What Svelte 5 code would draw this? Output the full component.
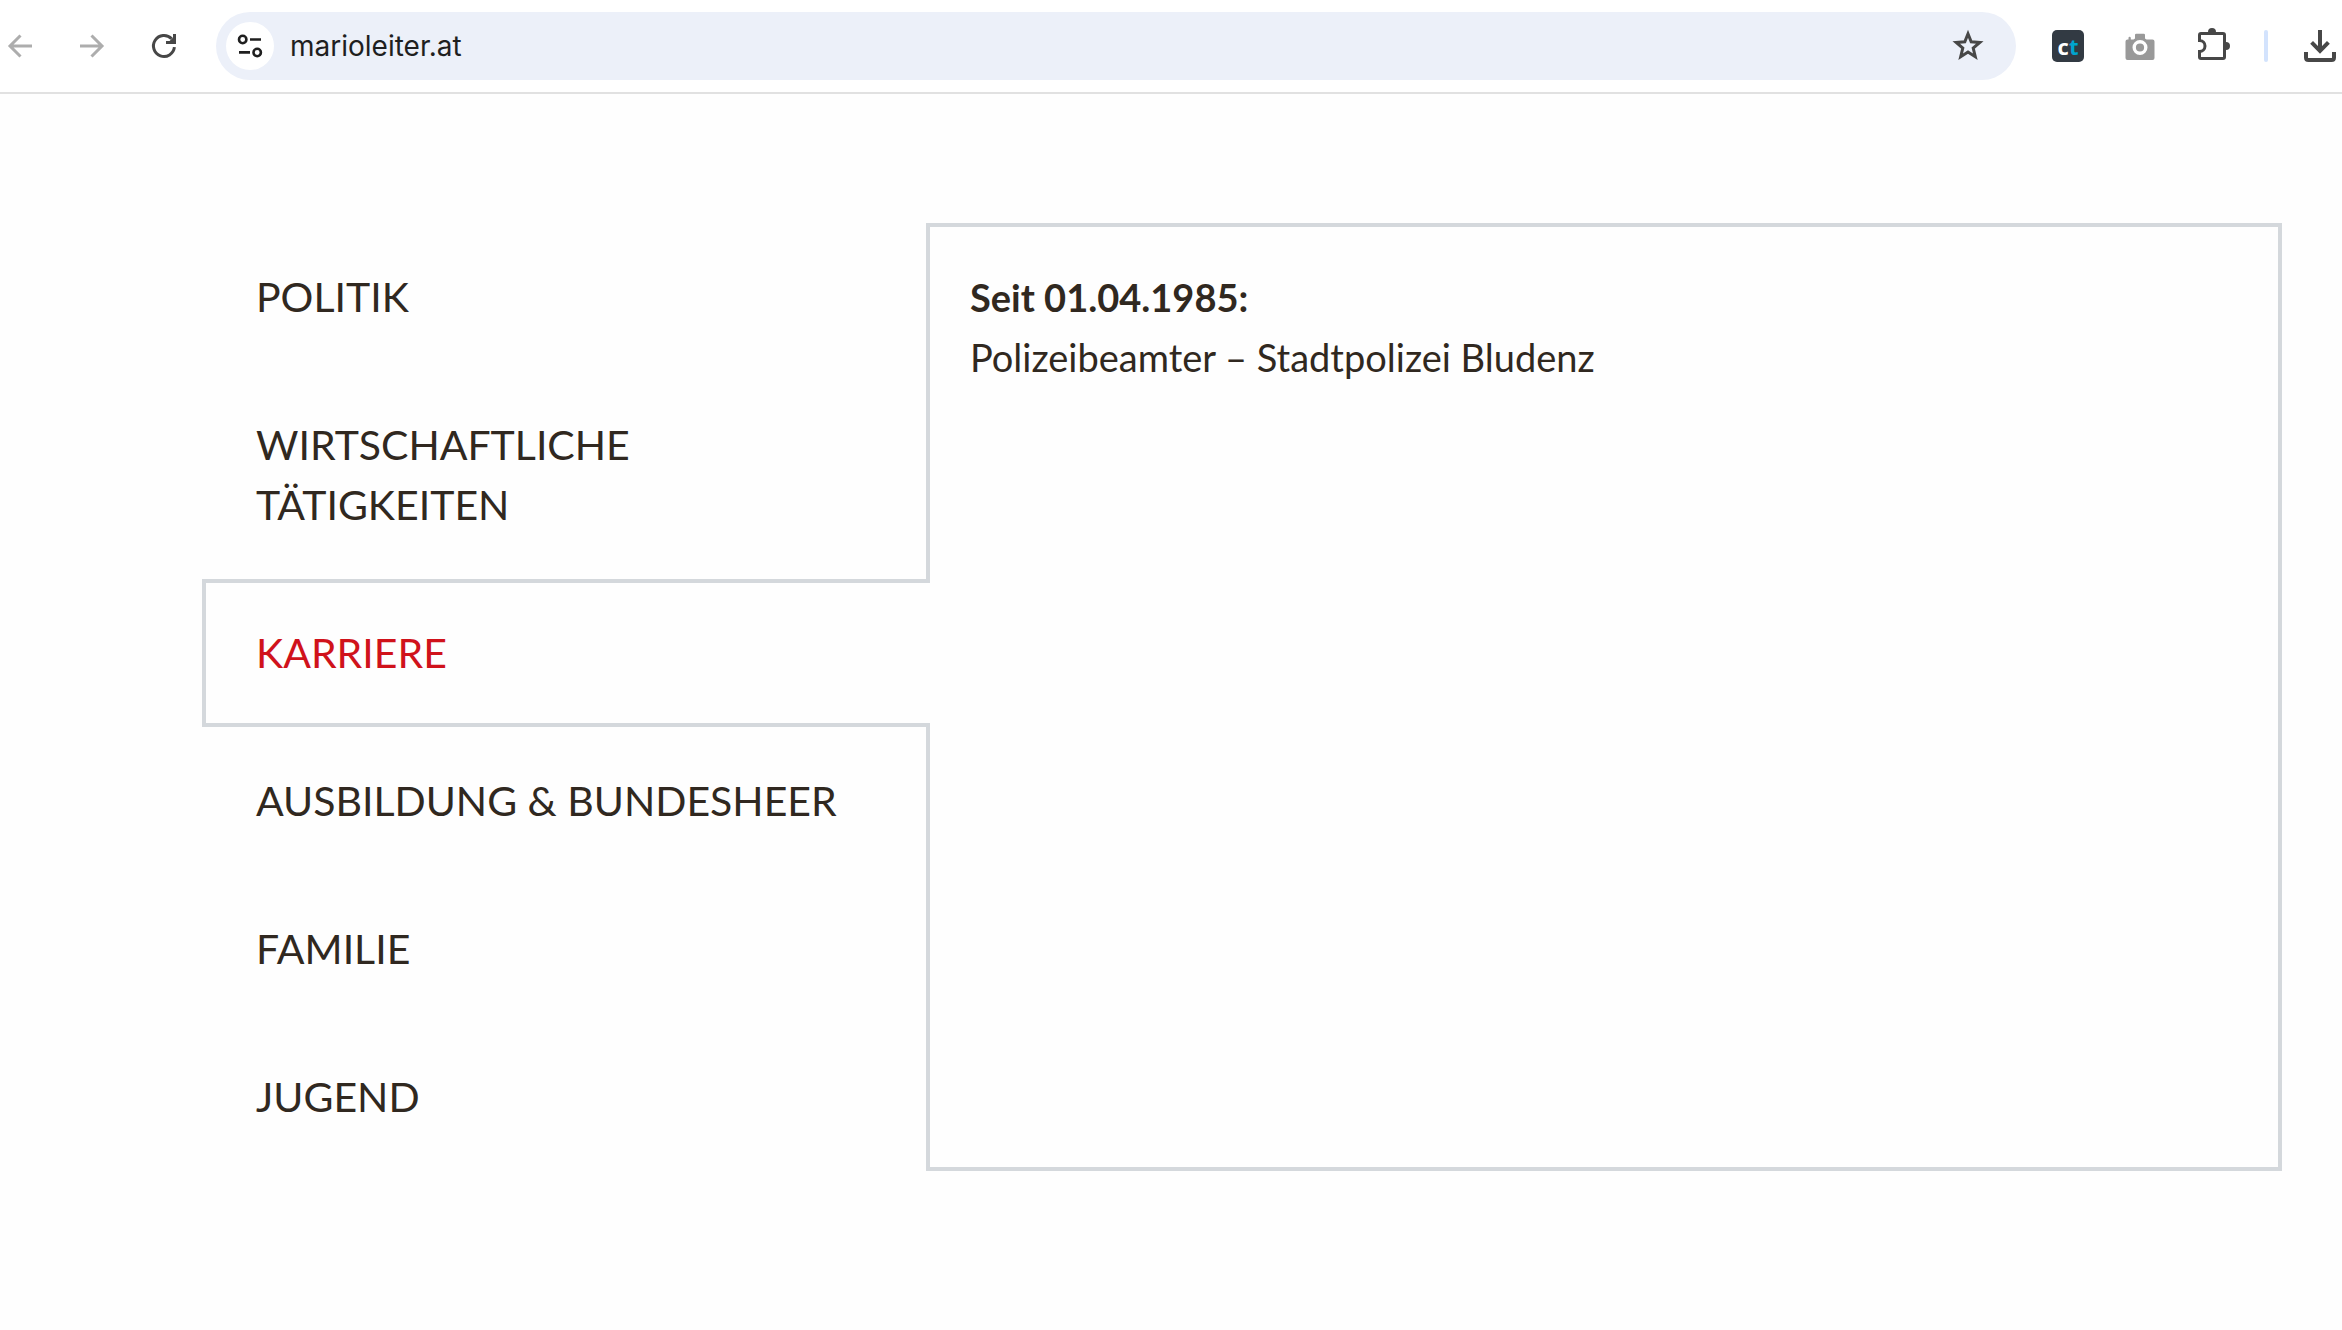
<script>
  let active = 'karriere';
  let url = 'marioleiter.at';

  const tabs = [
    { id: 'politik', label: 'Politik' },
    { id: 'wirtschaft', label: 'Wirtschaftliche Tätigkeiten' },
    {
      id: 'karriere',
      label: 'Karriere',
      entries: [{ date: 'Seit 01.04.1985:', text: 'Polizeibeamter – Stadtpolizei Bludenz' }]
    },
    { id: 'ausbildung', label: 'Ausbildung & Bundesheer' },
    { id: 'familie', label: 'Familie' },
    { id: 'jugend', label: 'Jugend' }
  ];

  $: current = tabs.find((tab) => tab.id === active);
</script>

<header class="toolbar">
  <nav class="history" aria-label="Navigation">
    <button class="icon muted" aria-label="Zurück" disabled>
      <svg viewBox="0 0 32 32"><path d="M28 16H6M16.5 5.5L6 16l10.5 10.5" fill="none" stroke="currentColor" stroke-width="3" /></svg>
    </button>
    <button class="icon muted" aria-label="Vorwärts" disabled>
      <svg viewBox="0 0 32 32"><path d="M4 16h22M15.5 5.5L26 16 15.5 26.5" fill="none" stroke="currentColor" stroke-width="3" /></svg>
    </button>
    <button class="icon" aria-label="Neu laden">
      <svg viewBox="0 0 32 32">
        <path d="M26.4 17.2A10.5 10.5 0 1 1 23.6 8.8" fill="none" stroke="currentColor" stroke-width="3" />
        <path d="M25 4h3v10H18v-3h3.6L25 7.5z" fill="currentColor" />
      </svg>
    </button>
  </nav>

  <div class="omnibox">
    <button class="site-info" aria-label="Website-Informationen">
      <svg viewBox="0 0 48 48" fill="none" stroke="currentColor" stroke-width="2.6">
        <circle cx="16.7" cy="17.5" r="3.7" />
        <path d="M24 17.5h11M13 30.4h11" />
        <circle cx="31.2" cy="30.5" r="3.7" />
      </svg>
    </button>
    <input type="text" aria-label="Adresse" spellcheck="false" bind:value={url} />
    <button class="icon" aria-label="Lesezeichen">
      <svg viewBox="0 0 32 32"><path d="M16 3.8l3.2 8 8.6.7-6.6 5.6 2.1 8.6-7.3-4.6-7.3 4.6 2.1-8.6-6.6-5.6 8.6-.7z" fill="none" stroke="currentColor" stroke-width="3" /></svg>
    </button>
  </div>

  <div class="extensions">
    <button class="icon ct" aria-label="ct">c<span>t</span></button>
    <button class="icon camera" aria-label="Screenshot">
      <svg viewBox="0 0 32 32">
        <path fill="currentColor" d="M3.5 9.5h1V8q0-1.2 1.1-1.2T6.8 8v1.5h2.7L11 8.500V5q0-1.2 1.2-1.2h7.6Q21 3.8 21 5v3.5l1.500 1h6q2 0 2 2v16.500q0 2-2 2h-25q-2 0-2-2V11.500q0-2 2-2z" />
        <circle cx="16" cy="17.5" r="5.8" fill="none" stroke="#fff" stroke-width="3.4" />
      </svg>
    </button>
    <button class="icon" aria-label="Erweiterungen">
      <svg viewBox="0 0 32 32">
        <path d="M5 3.5h22q1.5 0 1.5 1.5v22q0 1.5-1.5 1.5H5q-1.5 0-1.5-1.5v-5.5a5.5 5.5 0 0 0 0-11V5q0-1.5 1.5-1.5z" fill="none" stroke="currentColor" stroke-width="3" />
        <path d="M12 3V2a4 4 0 0 1 8 0v1zM29 12h1a4 4 0 0 1 0 8h-1z" fill="currentColor" />
      </svg>
    </button>
    <span class="divider"></span>
    <button class="icon" aria-label="Downloads">
      <svg viewBox="0 0 32 32" fill="none" stroke="currentColor" stroke-width="4">
        <path d="M16 0v20M7.6 12.4L16 20.8l8.4-8.4" />
        <path d="M2 22v5.5Q2 30 4.5 30h23q2.5 0 2.5-2.5V22" />
      </svg>
    </button>
  </div>
</header>

<main class="biography">
  <div class="tabs" role="tablist" aria-orientation="vertical">
    {#each tabs as tab}
      <button
        class="tab"
        class:active={tab.id === active}
        role="tab"
        id={tab.id}
        aria-selected={tab.id === active}
        aria-controls="panel"
        on:click={() => (active = tab.id)}
      >
        {tab.label}
      </button>
    {/each}
  </div>

  <section class="panel" id="panel" role="tabpanel" aria-labelledby={active}>
    {#each current.entries ?? [] as entry}
      <p>
        <strong>{entry.date}</strong><br />
        {entry.text}
      </p>
    {/each}
  </section>
</main>

<style>
  :global(body) {
    margin: 0;
    background: #fefefe;
  }

  button {
    margin: 0;
    padding: 0;
    border: 0;
    background: none;
    color: inherit;
    font: inherit;
    cursor: pointer;
  }

  svg {
    display: block;
    width: 100%;
    height: 100%;
    overflow: visible;
  }

  .toolbar {
    display: flex;
    align-items: center;
    gap: 36px;
    padding: 12px 6px 12px 4px;
    border-bottom: 2px solid #e1e1e1;
    background: #fff;
    color: #474747;
  }

  .history,
  .extensions {
    display: flex;
    align-items: center;
    gap: 40px;
  }

  .icon {
    flex: none;
    width: 32px;
    height: 32px;
  }

  .muted {
    color: #adadad;
  }

  .omnibox {
    display: flex;
    flex: 1;
    align-items: center;
    min-width: 0;
    height: 68px;
    box-sizing: border-box;
    padding: 0 32px 0 10px;
    border-radius: 34px;
    background: #ecf0f9;
  }

  .site-info {
    flex: none;
    width: 48px;
    height: 48px;
    border-radius: 50%;
    background: #fff;
    color: #1f1f1f;
  }

  .omnibox input {
    flex: 1;
    min-width: 0;
    padding: 0 16px;
    border: 0;
    outline: 0;
    background: none;
    color: #1f1f1f;
    font: 28px/40px Inter, sans-serif;
  }

  .ct {
    border-radius: 5px;
    background: #323a43;
    color: #fff;
    font: bold 22px/30px "Open Sans", sans-serif;
    text-align: center;
  }

  .ct span {
    color: #00a5cf;
  }

  .camera {
    color: #999;
  }

  .divider {
    width: 4px;
    height: 32px;
    margin: 0 -4px;
    border-radius: 2px;
    background: #d3e3fd;
  }

  .biography {
    display: grid;
    grid-template-columns: minmax(0, 724fr) minmax(0, 1356fr);
    padding: 129px 60px 129px 202px;
    color: #302820;
    font-family: Lato, sans-serif;
  }

  .tabs {
    display: flex;
    flex-direction: column;
  }

  .tab {
    padding: 40px 50px;
    border: 4px solid transparent;
    border-right: 0;
    font-size: 41px;
    line-height: 60px;
    text-align: left;
    text-transform: uppercase;
  }

  /* the open tab runs over the panel's left border */
  .tab.active {
    position: relative;
    margin-right: -4px;
    border-color: #d4d8dc;
    background: #fefefe;
    color: #d0121b;
  }

  .panel {
    padding: 40px;
    border: 4px solid #d4d8dc;
    font-size: 38px;
    line-height: 60px;
  }

  .panel p {
    margin: 0 0 30px;
  }
</style>
